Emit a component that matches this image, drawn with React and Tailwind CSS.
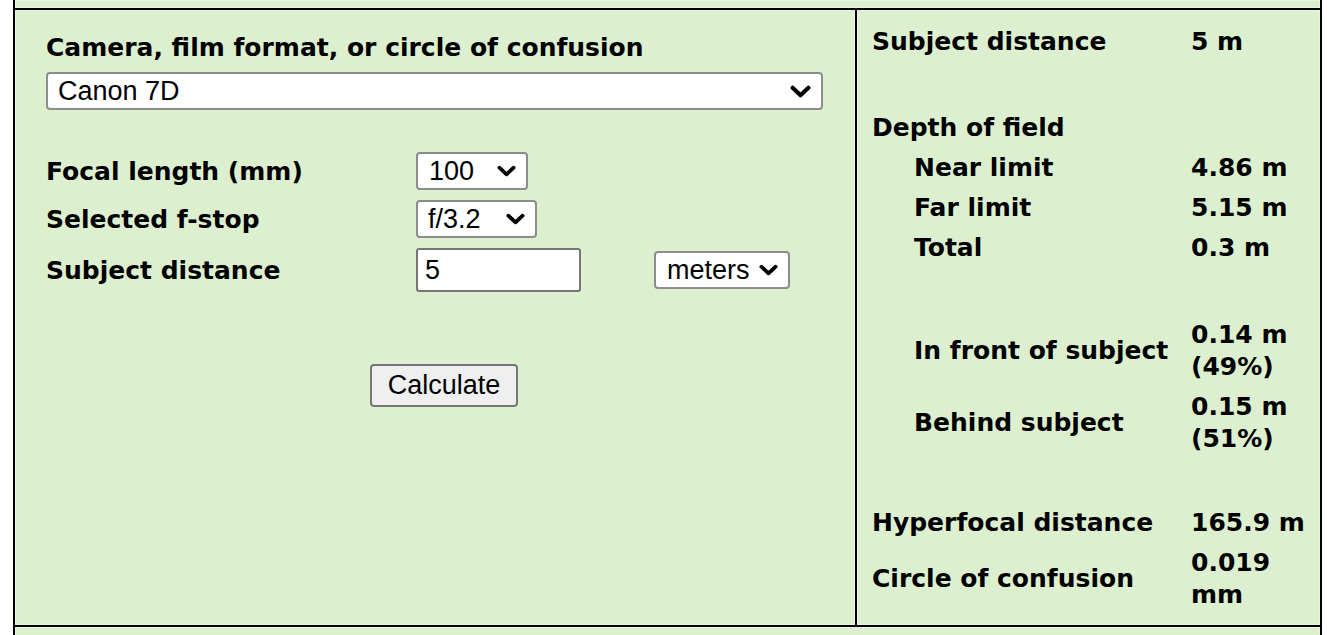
import React from "react";

function Chevron({ w = 18, h = 11 }) {
  return (
    <svg width={w} height={h} viewBox="0 0 20 12" className="shrink-0">
      <path d="M2.5 2.5 L10 9.5 L17.5 2.5" fill="none" stroke="#000" strokeWidth="4" strokeLinecap="round" strokeLinejoin="round" />
    </svg>
  );
}

function FakeSelect({ value, className, pl = "pl-[10px]", big = false }) {
  return (
    <div
      className={`flex items-center justify-between bg-white border-2 border-[#8d8d8d] rounded-[4px] h-[38px] pr-[10px] ${pl} text-[27px] font-normal leading-none text-black ${className}`}
      style={{ fontFamily: '"Liberation Sans", Arial, sans-serif' }}
    >
      <span>{value}</span>
      {big ? <Chevron w={21} h={13} /> : <Chevron w={19} h={12} />}
    </div>
  );
}

function Row({ label, value, indent = false }) {
  return (
    <div className="flex py-[4px] leading-[32px] items-center">
      <div className={`w-[319px] shrink-0 ${indent ? "pl-[42px]" : ""}`}>{label}</div>
      <div className="w-[125px] shrink-0">{value}</div>
    </div>
  );
}

export default function App() {
  return (
    <div
      className="bg-white w-[1335px] h-[635px] overflow-hidden font-bold text-black"
      style={{ fontFamily: '"DejaVu Sans", Verdana, sans-serif' }}
    >
      <div className="ml-[13px] w-[1309px] border-x-2 border-black bg-[#dcf0d0]">
        <div className="h-[8px] shadow-[inset_0_0_0_1px_#e8f5e1]" />
        <div className="flex border-y-2 border-black h-[619px]">
          {/* Left cell */}
          <div className="w-[842px] border-r-2 border-black shadow-[inset_0_0_0_1px_#e8f5e1] pl-[31px] pt-[22px] text-[25px]">
            <div className="leading-[32px]">Camera, film format, or circle of confusion</div>
            <FakeSelect value="Canon 7D" className="mt-[8px] w-[777px]" big />
            <div className="mt-[42px] flex flex-col gap-[10px]">
              <div className="flex items-center">
                <div className="w-[370px] shrink-0 leading-[32px] pt-[2px]">Focal length (mm)</div>
                <FakeSelect value="100" className="w-[112px]" pl="pl-[11px]" />
              </div>
              <div className="flex items-center">
                <div className="w-[370px] shrink-0 leading-[32px] pt-[2px]">Selected f-stop</div>
                <FakeSelect value="f/3.2" className="w-[121px]" />
              </div>
              <div className="flex items-center">
                <div className="w-[370px] shrink-0 leading-[32px] pt-[2px]">Subject distance</div>
                <div className="w-[238px] shrink-0">
                  <div
                    className="w-[165px] h-[44px] bg-white border-2 border-[#767676] rounded-[3px] flex items-center pl-[7px] text-[27px] font-normal leading-none"
                    style={{ fontFamily: '"Liberation Sans", Arial, sans-serif' }}
                  >
                    5
                  </div>
                </div>
                <FakeSelect value="meters" className="w-[136px]" pl="pl-[11px]" />
              </div>
            </div>
            <button
              className="mt-[72px] ml-[324px] w-[148px] h-[43px] bg-[#efefef] border-2 border-[#767676] rounded-[4px] text-[27px] font-normal leading-none text-black"
              style={{ fontFamily: '"Liberation Sans", Arial, sans-serif' }}
            >
              Calculate
            </button>
          </div>
          {/* Right cell */}
          <div className="flex-1 shadow-[inset_0_0_0_1px_#e8f5e1] pl-[15px] pt-[12px] text-[25px]">
            <Row label="Subject distance" value="5 m" />
            <div className="h-[46px]" />
            <Row label="Depth of field" value="" />
            <Row label="Near limit" value="4.86 m" indent />
            <Row label="Far limit" value="5.15 m" indent />
            <Row label="Total" value="0.3 m" indent />
            <div className="h-[47px]" />
            <Row label="In front of subject" value="0.14 m (49%)" indent />
            <Row label="Behind subject" value="0.15 m (51%)" indent />
            <div className="h-[44px]" />
            <Row label="Hyperfocal distance" value="165.9 m" />
            <Row label="Circle of confusion" value="0.019 mm" />
          </div>
        </div>
        <div className="h-[20px] shadow-[inset_0_0_0_1px_#e8f5e1]" />
      </div>
    </div>
  );
}
